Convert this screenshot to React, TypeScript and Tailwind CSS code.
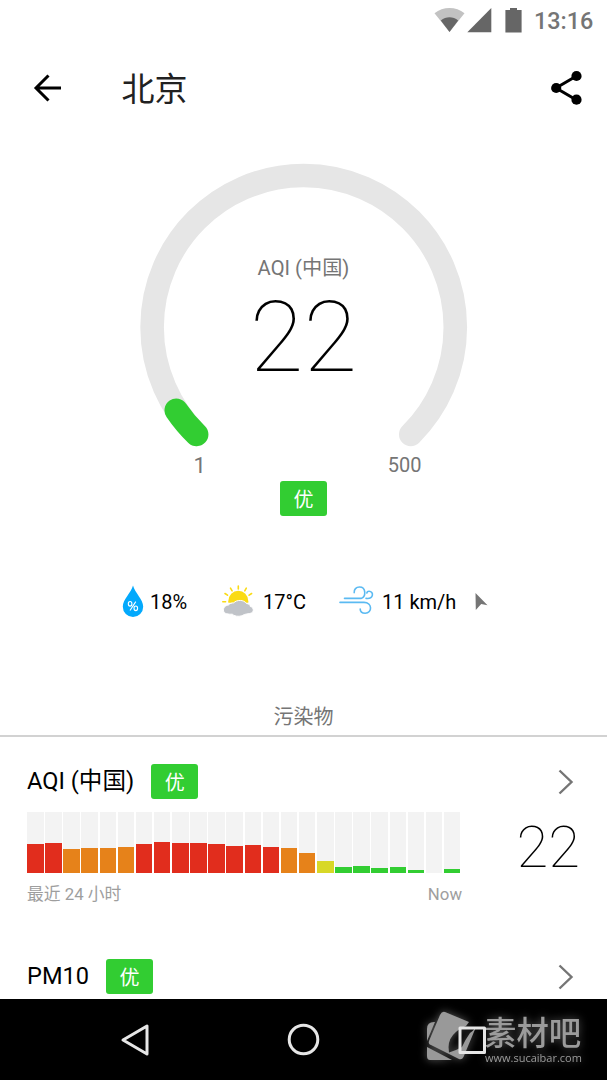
import { clsx } from "clsx";

type Level = "good" | "moderate" | "poor" | "bad";

const LEVEL_COLORS: Record<Level, string> = {
  good: "bg-[#32cd32]",
  moderate: "bg-[#d8d827]",
  poor: "bg-[#e6821a]",
  bad: "bg-[#e12d1d]",
};

const HISTORY: { value: number; level: Level }[] = [
  { value: 29.5, level: "bad" },
  { value: 30, level: "bad" },
  { value: 24, level: "poor" },
  { value: 25, level: "poor" },
  { value: 25, level: "poor" },
  { value: 26, level: "poor" },
  { value: 29, level: "bad" },
  { value: 31, level: "bad" },
  { value: 30.5, level: "bad" },
  { value: 30, level: "bad" },
  { value: 29, level: "bad" },
  { value: 27, level: "bad" },
  { value: 28, level: "bad" },
  { value: 26.5, level: "bad" },
  { value: 25, level: "poor" },
  { value: 20.5, level: "poor" },
  { value: 12.5, level: "moderate" },
  { value: 6.3, level: "good" },
  { value: 7, level: "good" },
  { value: 5, level: "good" },
  { value: 6, level: "good" },
  { value: 3.3, level: "good" },
  { value: 0, level: "good" },
  { value: 4, level: "good" },
];

function Badge() {
  return (
    <span className="flex h-[35px] w-[47px] items-center justify-center rounded-[3px] bg-[#32cd32] pt-[2px] text-[20px] leading-none text-white">
      优
    </span>
  );
}

function Chevron() {
  return (
    <svg width="16" height="26" viewBox="0 0 16 26" fill="none" stroke="#757575" strokeWidth="2.4">
      <path d="M1.5 1.5 L13.5 13 L1.5 24.5" />
    </svg>
  );
}

function StatusBar() {
  return (
    <div className="flex h-10 shrink-0 items-center pl-[434px]">
      <svg width="90" height="40" viewBox="0 0 90 40">
        <path d="M15.5 32 L0.5 13.3 C9 6.2 22 6.2 30.5 13.3 Z" fill="#c2c2c2" />
        <path d="M15.5 32 L6.8 20.5 C12 16.2 19 16.2 24.2 20.5 Z" fill="#666" />
        <path d="M57.3 8 V32.3 H33.3 Z" fill="#666" />
        <path d="M76 8 H83 V10 H87.6 V32.5 H71.4 V10 H76 Z" fill="#666" />
      </svg>
      <span className="ml-[10px] mt-[4px] text-[23.4px] font-medium leading-none text-[#757575]">13:16</span>
    </div>
  );
}

function Header() {
  return (
    <header className="flex h-24 shrink-0 items-center pl-[33px] pr-[25px]">
      <svg width="30" height="30" viewBox="0 0 30 30" fill="none" stroke="#000" strokeWidth="3">
        <path d="M28 15 H3 M15.5 2.5 L3 15 L15.5 27.5" />
      </svg>
      <h1 className="ml-[58.5px] pt-[2px] text-[33px] leading-none text-[#212121]">北京</h1>
      <svg className="ml-auto" width="32" height="36" viewBox="0 0 32 36">
        <path d="M26.5 6 L6 18 L26.5 30" fill="none" stroke="#000" strokeWidth="3" />
        <circle cx="26.5" cy="6" r="5.1" />
        <circle cx="6.2" cy="18" r="5.1" />
        <circle cx="26.5" cy="29.7" r="5.1" />
      </svg>
    </header>
  );
}

function Gauge() {
  return (
    <section className="flex h-[434px] shrink-0 flex-col items-center pt-[27px]">
      <div className="grid h-[288px] w-[328px] shrink-0">
        <svg className="col-start-1 row-start-1" width="328" height="288" viewBox="0.3 -0.3 328 288" fill="none" strokeWidth="23.6" strokeLinecap="round">
          <path d="M56.9 271.1 A151.6 151.6 0 1 1 271.1 271.1" stroke="#e6e6e6" />
          <path d="M56.9 271.1 A151.6 151.6 0 0 1 36.6 247" stroke="#32cd32" />
        </svg>
        <div className="col-start-1 row-start-1 flex flex-col items-center pt-[93px]">
          <span className="text-[20.2px] leading-6 text-[#757575]">AQI (中国)</span>
          <span className="mt-[8px] text-[98px] font-thin leading-[100px] text-black">22</span>
        </div>
      </div>
      <div className="flex h-[30px] w-[222px] shrink-0 items-center justify-between text-[20px] leading-none text-[#757575]">
        <span className="pl-[1px] text-[22px]">1</span>
        <span className="-mr-[7px] -mt-[2px]">500</span>
      </div>
      <Badge />
    </section>
  );
}

function Weather() {
  return (
    <section className="flex h-16 shrink-0 items-center pl-[122px] text-[20px] leading-none text-black">
      <svg width="22" height="34" viewBox="0 0.7 22 34">
        <path d="M11 1.3 C9 9 .8 15 .8 22.4 A10.2 10.2 0 0 0 21.2 22.4 C21.2 15 13 9 11 1.3 Z" fill="#03a9fc" />
        <g fill="none" stroke="#fff" strokeWidth="1.1">
          <ellipse cx="8.1" cy="19.5" rx="1.8" ry="2.3" />
          <ellipse cx="13.8" cy="24" rx="1.8" ry="2.3" />
          <path d="M13.8 17.3 L8 26.2" />
        </g>
      </svg>
      <span className="ml-[6px] w-[71px]">18%</span>
      <svg width="34" height="34" viewBox="-0.3 0.3 34 34">
        <path d="M7 18 V16.5 A10 10.4 0 0 1 27 16.5 V18 Z" fill="#fadb14" />
        <g stroke="#fadb14" strokeWidth="1.6" strokeLinecap="round">
          <path d="M1.5 17 H4.3 M3.7 8.8 L6.2 10.5 M9.2 3.5 L10.8 6.2 M17 1.4 V4.3 M25 3.5 L23.5 6.2 M30.3 8.8 L27.8 10.5" />
        </g>
        <path d="M7.2 20.3 C8.5 18.7 10.5 18.2 12.3 18.2 C15.5 14.8 22.5 14.8 25.2 18.8 C27.5 19 28.9 20.3 29 21.8 C33 22.8 33.2 28 28.5 28.8 C26.5 29.2 24.5 29.2 23 29.8 C19.5 32.2 14 32.2 11 29.5 C7 29.6 3 29.3 2.2 26.3 C1.6 23 4 20.8 7.2 20.3 Z" fill="#c0c3c8" stroke="#fff" strokeWidth="1" />
      </svg>
      <span className="ml-[8px] w-[76px]">17°C</span>
      <svg width="35" height="34" viewBox="0 1 35 34" fill="none" stroke="#5bbaf2" strokeWidth="1.6" strokeLinecap="round">
        <path d="M5.5 14.4 H22 C27.3 12.8 27.2 3 20.5 3 C17 3 15 5.5 15.2 8.6" />
        <path d="M27 14.4 C35 15.4 35 7.2 30 7.3 C28.8 7.3 28 8 27.8 9" />
        <path d="M1 18.4 H25 C33.5 18.4 33.5 29.2 26.2 29.2 C23.2 29.2 21.2 27.5 21.2 25" />
      </svg>
      <span className="ml-[8px]">11 km/h</span>
      <svg className="ml-[18.5px]" width="13" height="18" viewBox="0 0.5 13 18">
        <path d="M.5 .5 L12.5 12.8 L6.2 11.5 L.8 17.5 Z" fill="#757575" />
      </svg>
    </section>
  );
}

function HistoryChart() {
  return (
    <div className="flex h-[61px] w-[433.4px] gap-[1.6px]">
      {HISTORY.map((h, i) => (
        <div key={i} className="flex flex-1 items-end bg-[#f3f3f3]">
          <div className={clsx("w-full", LEVEL_COLORS[h.level])} style={{ height: h.value }} />
        </div>
      ))}
    </div>
  );
}

function PollutantTitle({ name }: { name: string }) {
  return (
    <div className="flex h-[35px] items-center">
      <span className="mr-[17px] text-[23.6px] leading-none text-black">{name}</span>
      <Badge />
      <span className="ml-auto mr-[6px]">
        <Chevron />
      </span>
    </div>
  );
}

function Pollutants() {
  return (
    <section className="flex min-h-0 flex-1 flex-col overflow-hidden">
      <h2 className="flex h-[38px] shrink-0 items-center justify-center pt-[2px] text-[20px] leading-none text-[#757575]">
        污染物
      </h2>
      <div className="h-[2px] shrink-0 bg-[#d2d2d2]" />
      <div className="px-[27px] pt-[27px]">
        <PollutantTitle name="AQI (中国)" />
        <div className="mt-[13px] flex">
          <div>
            <HistoryChart />
            <div className="mt-3 flex w-[435px] justify-between text-[16.8px] leading-[18px] text-[#9e9e9e]">
              <span>最近 24 小时</span>
              <span>Now</span>
            </div>
          </div>
          <span className="ml-auto mt-[5px] text-[58px] font-thin leading-[60px] text-black">22</span>
        </div>
      </div>
      <div className="px-[27px] pt-[56px]">
        <PollutantTitle name="PM10" />
      </div>
    </section>
  );
}

function Watermark() {
  return (
    <div className="absolute left-[425px] top-[10px] flex text-[#9b9b9b] drop-shadow-[0_0_4px_rgba(255,255,255,0.35)]">
      <svg width="58" height="56" viewBox="0 0 58 56" fill="#999">
        <path d="M2 20 Q2 13 9 13 H10 L2 32 Z" />
        <path d="M2 38 L27 51 H5 Q2 51 2 47 Z" />
        <path d="M20 3 L44 13 L41 17 Q33 20 28 26 Q22 33 24 43.5 Q32 41 37 38 Q40 31 45 24 Q48 22 51 18 L38.5 48 Q37 51 34 50 L6 36 Q3 35 4 32 L15 6 Q17 2 20 3 Z" />
      </svg>
      <div className="flex flex-col pt-[9px]">
        <span className="pl-[1px] text-[32.4px] font-medium leading-[32px]">素材吧</span>
        <span className="pl-[2px] font-['Open_Sans',sans-serif] text-[11px] leading-[15px]">www.sucaibar.com</span>
      </div>
    </div>
  );
}

function NavBar() {
  return (
    <nav className="relative flex h-[81px] shrink-0 items-center bg-black pl-[120px]">
      <Watermark />
      <svg className="relative" width="30" height="34" viewBox="0 0 30 34" fill="none" stroke="#e6e6e6" strokeWidth="3" strokeLinejoin="round">
        <path d="M27 3 V31 L3 17 Z" />
      </svg>
      <svg className="relative ml-[137px]" width="34" height="34" viewBox="0.5 0.5 34 34" fill="none" stroke="#e6e6e6" strokeWidth="3">
        <circle cx="17" cy="17" r="14.3" />
      </svg>
      <svg className="relative ml-[136px]" width="30" height="30" viewBox="0 0 30 30" fill="none" stroke="#e6e6e6" strokeWidth="3" strokeLinejoin="round">
        <rect x="3" y="3" width="24.5" height="24.5" />
      </svg>
    </nav>
  );
}

export default function App() {
  return (
    <div className="flex h-[1080px] w-[607px] flex-col overflow-hidden bg-white font-[Roboto,'Noto_Sans_CJK_SC',sans-serif]">
      <StatusBar />
      <Header />
      <Gauge />
      <Weather />
      <div className="h-[63px] shrink-0" />
      <Pollutants />
      <NavBar />
    </div>
  );
}
